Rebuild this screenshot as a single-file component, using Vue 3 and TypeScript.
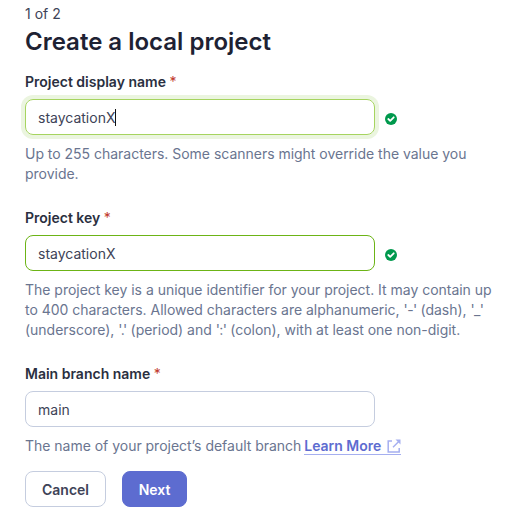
<script setup lang="ts">
import { ref } from 'vue'

interface Field {
  id: string
  label: string
  value: string
  help: string[]
  state: 'active' | 'valid' | 'plain'
  link?: string
}

const fields = ref<Field[]>([
  {
    id: 'name',
    label: 'Project display name',
    value: 'staycationX',
    help: ['Up to 255 characters. Some scanners might override the value you', 'provide.'],
    state: 'active',
  },
  {
    id: 'key',
    label: 'Project key',
    value: 'staycationX',
    help: [
      'The project key is a unique identifier for your project. It may contain up',
      "to 400 characters. Allowed characters are alphanumeric, '-' (dash), '_'",
      "(underscore), '.' (period) and ':' (colon), with at least one non-digit.",
    ],
    state: 'valid',
  },
  {
    id: 'branch',
    label: 'Main branch name',
    value: 'main',
    help: ['The name of your project’s default branch'],
    state: 'plain',
    link: 'Learn More',
  },
])

// Quoted symbols are set tighter than the surrounding sentence.
const split = (line: string): string[] => line.split(/('[^']')/)
</script>

<template>
  <main class="page">
    <p class="step">1 of 2</p>
    <h1 class="title">Create a local project</h1>
    <section v-for="f in fields" :key="f.id" class="field">
      <label class="label">{{ f.label }} <span class="req">*</span></label>
      <div class="row">
        <div class="input" :class="f.state">
          <span>{{ f.value }}</span><span v-if="f.state === 'active'" class="caret"></span>
        </div>
        <svg v-if="f.state !== 'plain'" class="check" viewBox="0 0 12 12" width="12" height="12">
          <circle cx="6" cy="6" r="6" fill="#00994d" />
          <path d="M3.3 6 5.2 7.8 8.7 4.3" fill="none" stroke="#fff" stroke-width="1.8" stroke-linecap="round" stroke-linejoin="round" />
        </svg>
      </div>
      <div class="help">
        <div v-for="line in f.help" :key="line">
          <span v-for="(part, i) in split(line)" :key="i" :class="{ symbol: i % 2 === 1 }">{{ part }}</span>
          {{ ' ' }}<a v-if="f.link" class="link">{{ f.link }}
            <svg class="ext" viewBox="0 0 14 14" width="14" height="14" fill="none" stroke="#a5aff0" stroke-width="1.5">
              <path d="M5 2H1.2v11h11V9" />
              <path d="M6 8.2 12 2.2" />
              <path d="M8.5.5h5v5z" fill="#a5aff0" stroke="none" />
            </svg>
          </a>
        </div>
      </div>
    </section>
    <div class="actions">
      <button class="btn">Cancel</button>
      <button class="btn primary">Next</button>
    </div>
  </main>
</template>

<style>
body {
  background: #fff;
}
</style>

<style scoped>
.page {
  box-sizing: border-box;
  padding: 4px 0 0 25px;
  font: 14px/20px Inter, sans-serif;
  color: #3e4357;
}
.step {
  margin: 0;
}
.title {
  margin: 2px 0 14px;
  font-size: 24px;
  line-height: 32px;
  font-weight: 600;
  color: #1e2233;
}
.field {
  margin-bottom: 24px;
}
.field:last-of-type {
  margin-bottom: 15px;
}
.label {
  display: block;
  font-weight: 600;
  color: #2a2f40;
}
.req {
  font-weight: 400;
  color: #c0392b;
}
.row {
  display: flex;
  align-items: center;
  gap: 10px;
  margin: 7px 0 9px;
}
.input {
  box-sizing: border-box;
  display: flex;
  align-items: center;
  width: 350px;
  height: 36px;
  padding: 2px 12px 0;
  border: 1px solid #c5cddf;
  border-radius: 8px;
}
.input.valid {
  border-color: #6cb416;
}
.input.active {
  border-color: #a6d45f;
  box-shadow: 0 0 0 4px #ebf5df;
}
.caret {
  width: 1px;
  height: 17px;
  margin-top: -2px;
  background: #111;
}
.check {
  margin-top: 4px;
}
.help {
  color: #6a7590;
  letter-spacing: -0.02px;
  white-space: nowrap;
}
.symbol {
  letter-spacing: -0.6px;
}
.link {
  margin-left: -1px;
  color: #5d6cd0;
  font-weight: 600;
  border-bottom: 1px solid #a5aff0;
}
.ext {
  margin-left: 2px;
  vertical-align: -2px;
}
.actions {
  display: flex;
  gap: 16px;
}
.btn {
  box-sizing: border-box;
  width: 81px;
  height: 36px;
  padding: 2px 0 0;
  border: 1px solid #c5cddf;
  border-radius: 8px;
  background: #fff;
  font: 600 14px/20px Inter, sans-serif;
  color: #3e4357;
}
.primary {
  width: 65px;
  border-color: #5d6cd0;
  background: #5d6cd0;
  color: #fff;
}
</style>
